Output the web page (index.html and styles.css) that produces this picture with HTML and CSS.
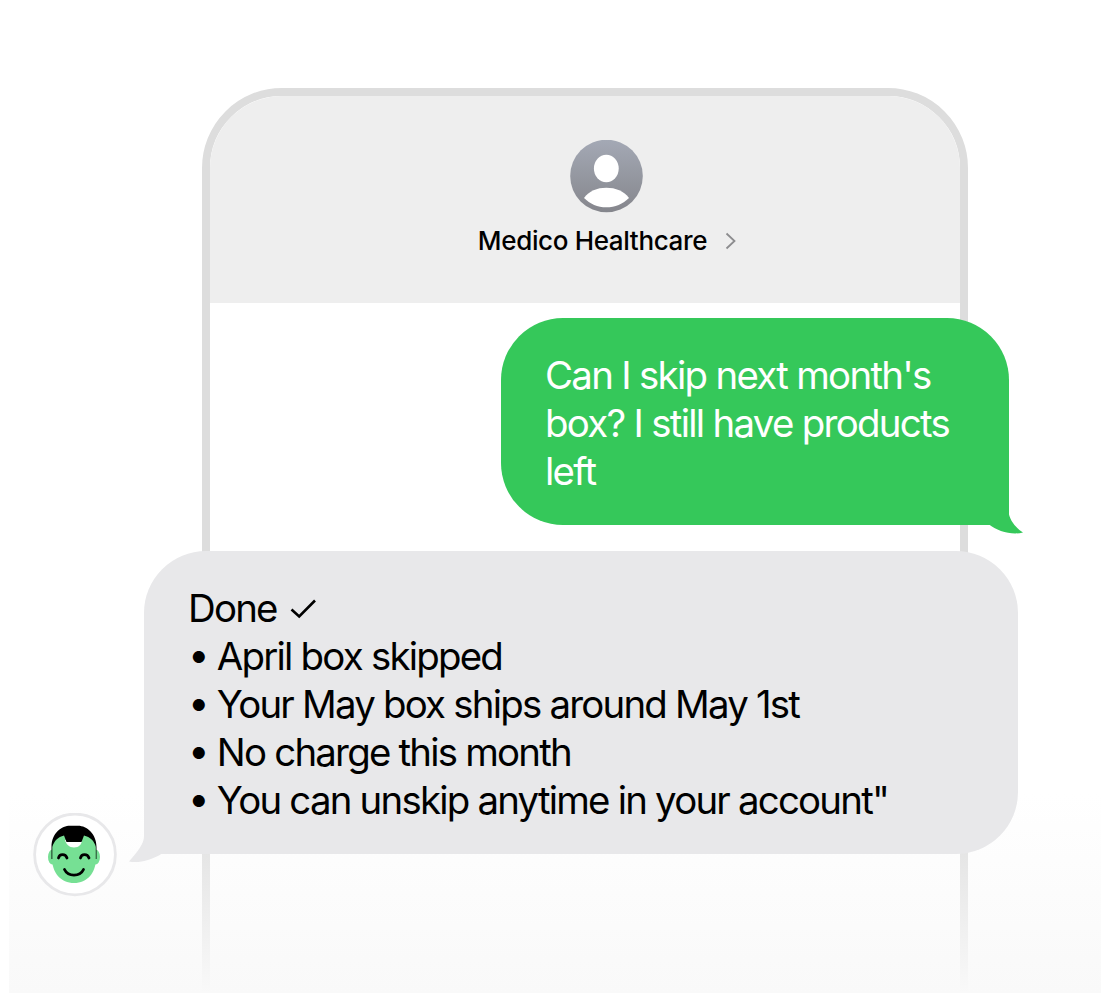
FILE: index.html
```html
<!DOCTYPE html>
<html lang="en">
<head>
    <meta charset="UTF-8">
    <meta name="viewport" content="width=device-width, initial-scale=1.0">
    <title>Medico Healthcare</title>
    <link rel="stylesheet" href="styles.css">
</head>
<body>
    <div class="scene">
        <div class="phone">
            <div class="phone-header">
                <svg class="contact-photo" viewBox="0 0 73 73">
                    <defs>
                        <linearGradient id="photo" x1="0" y1="0" x2="0" y2="1">
                            <stop offset="0" stop-color="#a4a9b5"/>
                            <stop offset="1" stop-color="#85868c"/>
                        </linearGradient>
                    </defs>
                    <circle cx="36.5" cy="36" r="36.3" fill="url(#photo)"/>
                    <ellipse cx="36.3" cy="28.5" rx="12.4" ry="13.8" fill="#fff"/>
                    <path d="M14 58C19 51 27 47.8 36.3 47.8S54 51 59 58C53 64 45 67.3 36.3 67.3S20 64 14 58Z" fill="#fff"/>
                </svg>
                <div class="contact">
                    <span class="contact-name">Medico Healthcare</span>
                    <svg class="chevron" viewBox="0 0 12 18">
                        <path d="M1.5 1.5L9.5 9L1.5 16.5"/>
                    </svg>
                </div>
            </div>

            <div class="thread">
                <div class="bubble sent">
                    <p>Can I skip next month's<br>box? I still have products<br>left</p>
                    <svg class="tail" viewBox="0 0 38 28">
                        <path d="M0 0H23.5V5C24 14 31 22 38 26.5C27 29.5 12 25 4 18.5H0Z"/>
                    </svg>
                </div>
                <div class="bubble received">
                    <p>Done <svg class="check" viewBox="0 0 27 20"><path d="M1.5 10.5L9.2 17.5L25 1.5"/></svg></p>
                    <p><span class="dot">•</span> April box skipped</p>
                    <p><span class="dot">•</span> Your May box ships around May 1st</p>
                    <p><span class="dot">•</span> No charge this month</p>
                    <p><span class="dot">•</span> You can unskip anytime in your account"</p>
                    <svg class="tail" viewBox="0 0 40 40">
                        <path d="M15 0V12C15 20 9 27 0 37.5C10 39.5 23 36 33 29.5H40V0Z"/>
                    </svg>
                    <svg class="agent" viewBox="0 0 84 84">
                        <circle cx="42" cy="41.5" r="40.4" fill="#fff" stroke="#e8e8ea" stroke-width="2.8"/>
                        <ellipse cx="19.5" cy="44" rx="4.5" ry="7.5" fill="#76e094"/>
                        <ellipse cx="62.5" cy="44" rx="4.5" ry="7.5" fill="#76e094"/>
                        <path d="M19 36C19 21 28 14 41 14S63 21 63 36V45C63 60 54 70 41 70S19 60 19 45Z" fill="#76e094"/>
                        <path d="M32 27H49C49 31 46 34.5 41 34.5S33 31 32 27Z" fill="#fff"/>
                        <path d="M18.5 46V34C18.5 20 29 12.8 37 12.8H45C54 12.8 63.5 21 63.5 34V46H62.8V34C61.5 28 57 24 51 22.5L48.5 29H33.5L31 22.5C25 24 21 28 19.3 34V46Z" fill="#000"/>
                        <path class="face-line" d="M25.5 45C26.5 40.5 32.5 40.5 34 45M47.5 45C48.5 40.5 54.5 40.5 56 45M31.5 56.5C35 64 47 64 50.5 56.5"/>
                    </svg>
                </div>
            </div>
        </div>
        <div class="fade"></div>
    </div>
</body>
</html>
```
FILE: styles.css
```css
* {
    box-sizing: border-box;
}
body {
    margin: 0;
    background: #fff;
    color: #000;
    font-family: Inter, sans-serif;
}
.scene {
    position: relative;
    height: 993px;
    padding: 88px 142px 0 202px;
    overflow: hidden;
}
.phone {
    height: 1100px;
    border: 8px solid #ddd;
    border-radius: 80px;
}
.phone-header {
    display: flex;
    flex-direction: column;
    align-items: center;
    height: 207px;
    padding-top: 44px;
    background: #eee;
    border-radius: 72px 72px 0 0;
}
.contact-photo {
    width: 73px;
    height: 73px;
    margin-left: 43px;
}
.contact {
    display: flex;
    align-items: center;
    gap: 18px;
    margin: 12px 0 0 45px;
}
.contact-name {
    font-size: 26px;
    font-weight: 500;
    line-height: 32px;
    letter-spacing: -0.35px;
    white-space: nowrap;
}
.chevron {
    width: 12px;
    height: 18px;
    fill: none;
    stroke: #8c8c8e;
    stroke-width: 1.8;
}
.thread {
    display: flex;
    flex-direction: column;
    gap: 26px;
    margin: 15px -58px 0 -66px;
}
.bubble {
    position: relative;
    z-index: 2;
    font-size: 38.4px;
    font-weight: 400;
    font-optical-sizing: none;
    line-height: 48px;
    letter-spacing: -1.78px;
    white-space: nowrap;
}
.bubble p {
    margin: 0;
}
.sent {
    align-self: flex-end;
    width: 508px;
    height: 207px;
    margin-right: 9px;
    padding: 33px 44px;
    background: #35c85a;
    border-radius: 62px 62px 0 62px;
    color: #fff;
    letter-spacing: -1.7px;
}
.received {
    height: 303px;
    padding: 33px 44px;
    background: #e8e8ea;
    border-radius: 62px 62px 62px 0;
}
.dot {
    line-height: 0;
    vertical-align: 2.5px;
}
.tail {
    position: absolute;
}
.sent .tail {
    right: -14px;
    bottom: -9px;
    width: 38px;
    height: 28px;
    fill: #35c85a;
}
.received .tail {
    left: -15px;
    bottom: -10px;
    width: 40px;
    height: 40px;
    fill: #e8e8ea;
}
.check {
    width: 27px;
    height: 20px;
    margin: 0 0 3px 4px;
    fill: none;
    stroke: #000;
    stroke-width: 2.6;
}
.agent {
    position: absolute;
    left: -111px;
    bottom: -43px;
    width: 84px;
    height: 84px;
}
.face-line {
    fill: none;
    stroke: #000;
    stroke-width: 2.8;
    stroke-linecap: round;
}
/* phone dissolves into the page at the bottom */
.fade {
    position: absolute;
    left: 9px;
    right: 9px;
    bottom: 0;
    z-index: 1;
    height: 200px;
    background: linear-gradient(rgba(249, 249, 249, 0), #f9f9f9);
}
```
